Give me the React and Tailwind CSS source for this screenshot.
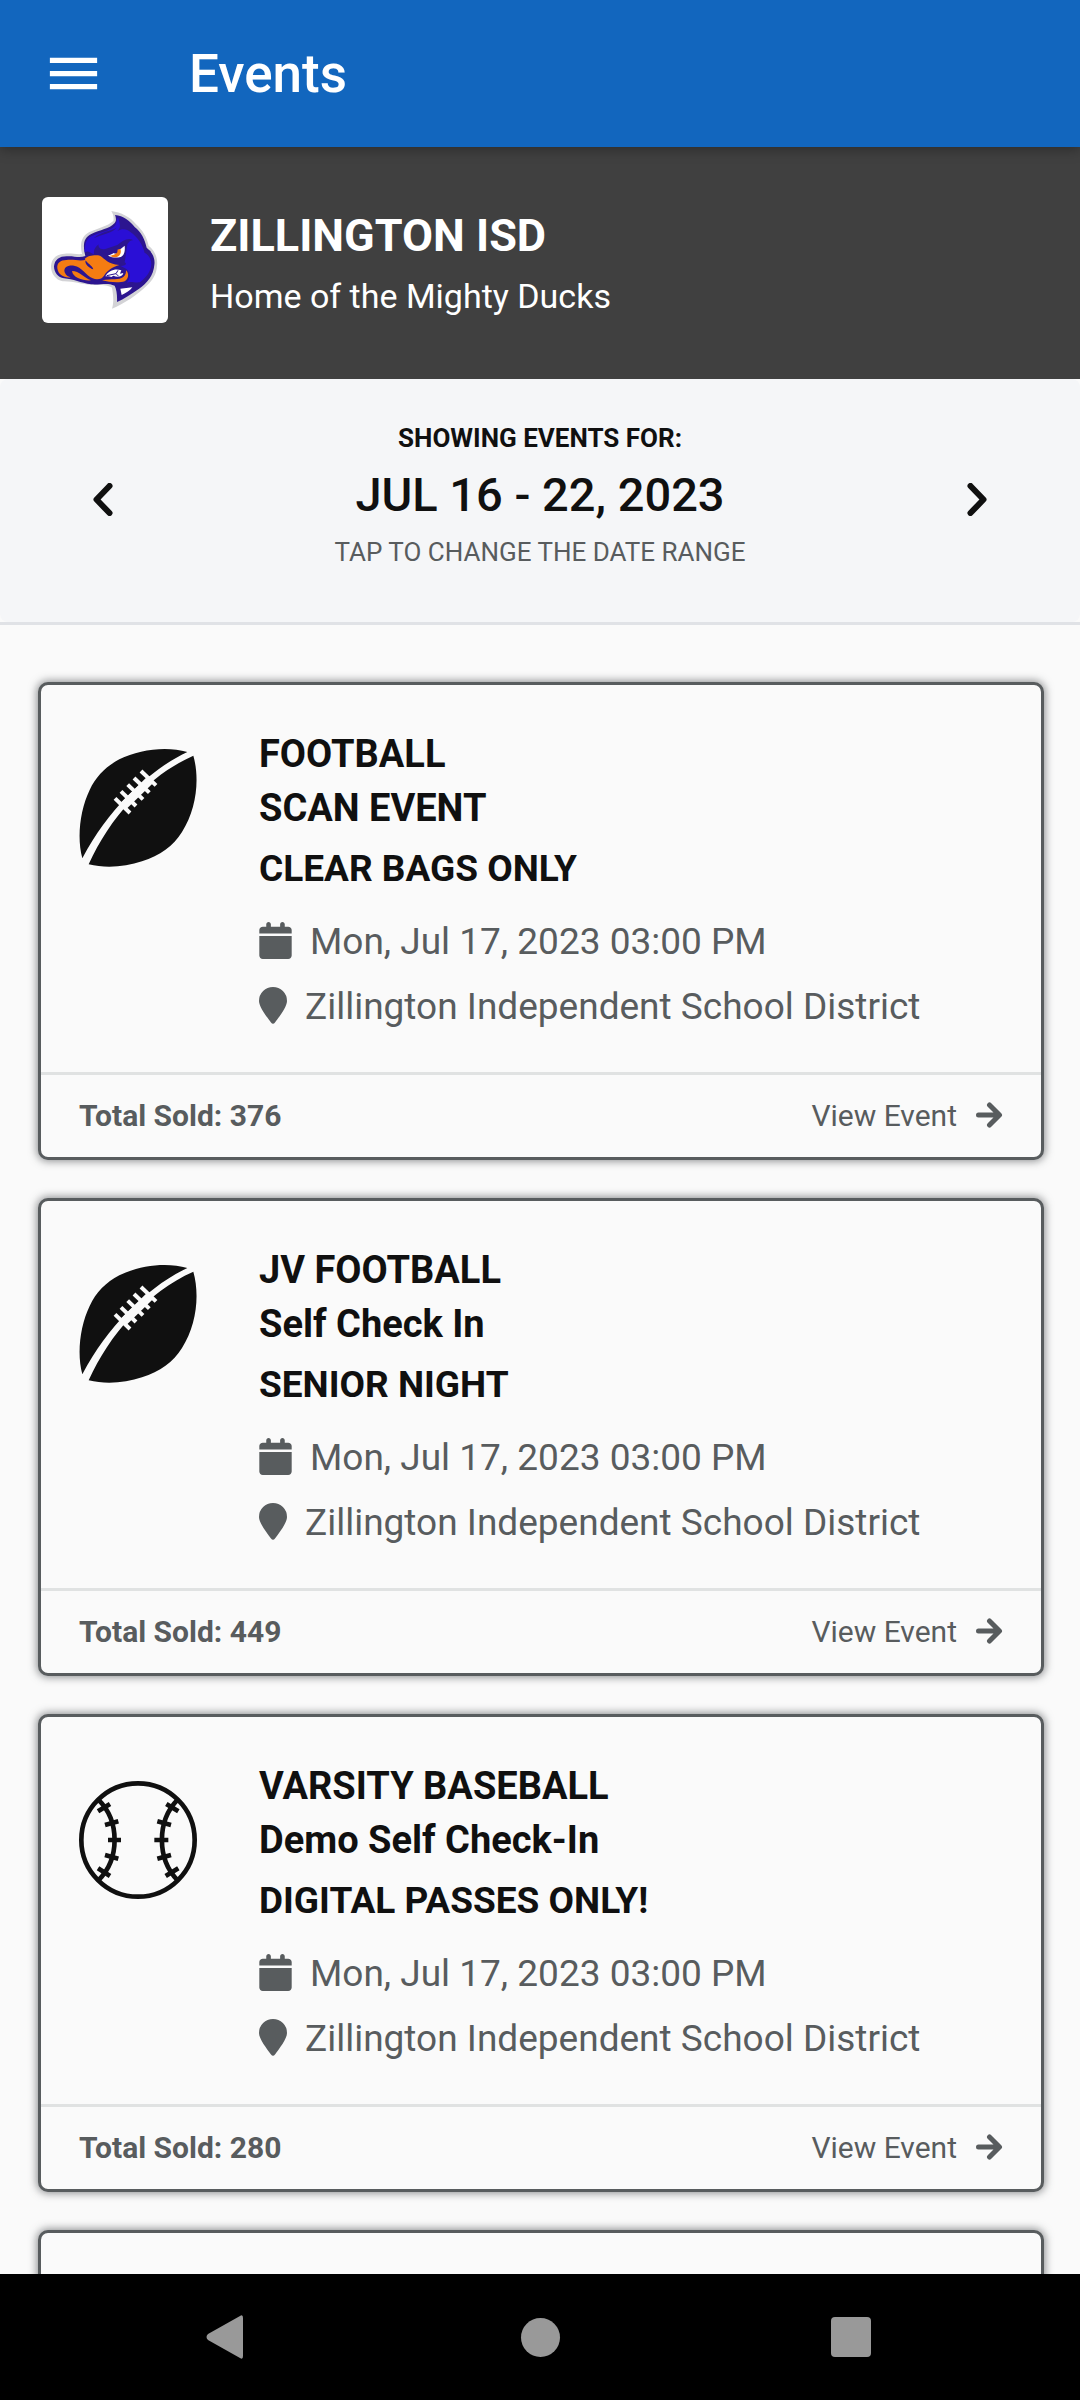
import { FaCalendar } from "react-icons/fa6";

const events = [
  { sport: "FOOTBALL", name: "SCAN EVENT", note: "CLEAR BAGS ONLY", sold: 376, icon: "football" },
  { sport: "JV FOOTBALL", name: "Self Check In", note: "SENIOR NIGHT", sold: 449, icon: "football" },
  { sport: "VARSITY BASEBALL", name: "Demo Self Check-In", note: "DIGITAL PASSES ONLY!", sold: 280, icon: "baseball" },
];

function Football() {
  return (
    <svg viewBox="57 57 354 354" className="mt-[22px] size-[118px] shrink-0" aria-hidden="true">
      <path fill="#101010" d="M382 66C320 48 238 58 178 88C138 109 108 139 89 180C60 240 50 322 67 385C106 312 150 252 202 199C262 140 315 98 382 66Z" />
      <path fill="#101010" d="M400 77C420 148 409 238 366 306C340 348 300 377 246 394C196 411 136 415 86 403C118 334 158 270 212 214C270 155 330 108 400 77Z" />
      <g stroke="#fafafa" strokeWidth="12">
        <path d="M165 205L210 249" />
        <path d="M183 184L228 228" />
        <path d="M203 164L249 208" />
        <path d="M222 144L268 188" />
        <path d="M243 123L288 166" />
        <path strokeWidth="26" d="M187 231L272 148" />
      </g>
    </svg>
  );
}

function Baseball() {
  return (
    <svg viewBox="57 60 354 354" className="mt-[22px] size-[118px] shrink-0" fill="none" stroke="#101010" strokeWidth="14" aria-hidden="true">
      <circle cx="234" cy="237" r="170" />
      <path d="M115 116C180 180 180 294 115 358" />
      <path d="M353 116C290 180 290 294 353 358" />
      <path d="M114 151L150 129M135 192L175 181M144 237H183M135 282L175 293M114 322L150 345" />
      <path d="M355 151L319 129M333 192L292 181M325 237H283M333 282L292 293M355 322L317 345" />
    </svg>
  );
}

function DuckLogo() {
  return (
    <svg viewBox="36 36 378 378" className="size-[126px] shrink-0 rounded-md bg-white" role="img" aria-label="Mighty Ducks logo">
      <path fill="#d3d3d6" d="M244 78C272 82 302 96 318 118C338 136 350 156 356 182C376 198 384 222 381 242C380 266 368 286 350 302C324 328 282 356 246 371C252 352 250 330 246 308C236 300 214 299 184 300C150 298 132 288 98 289C76 284 62 264 63 242C65 220 80 207 104 206C124 204 140 209 156 207C148 176 156 152 178 141C204 130 232 124 250 108C252 98 250 88 244 78Z" />
      <path fill="#2c1590" d="M255 90C280 92 300 108 314 126C334 142 344 162 350 188C368 202 376 222 373 240C370 272 352 294 326 312C304 328 282 342 261 351C262 332 260 314 254 302C232 292 212 300 184 298C152 294 130 282 102 280C84 278 72 262 72 244C74 224 88 214 110 214C130 212 148 220 166 213C158 180 160 158 184 147C210 134 238 132 254 114C260 106 258 98 255 90Z" />
      <path fill="#2a0fd6" d="M264 97C268 112 276 128 262 138C276 130 292 132 302 142C322 156 338 178 344 204C352 206 364 220 364 238C362 262 348 278 330 292C312 294 304 288 290 293C302 280 304 262 288 251L272 243C288 242 292 236 284 232L292 178C298 168 304 164 310 166C294 156 278 168 262 180L226 192C208 196 204 184 206 178C196 186 190 194 192 208C180 204 176 196 164 202C164 182 166 164 184 154C206 144 228 140 246 130C262 120 258 108 264 97Z" />
      <path fill="#2c1590" d="M191 160C214 138 240 140 260 128C242 148 216 146 191 160ZM338 178C345 190 352 196 364 199C350 202 340 192 338 178ZM240 204C258 190 278 188 291 176C282 190 272 196 262 202Z" />
      <path fill="#f57c12" d="M82 250C80 234 92 225 109 225C132 222 150 230 168 224C160 236 180 250 190 253C186 240 172 236 164 222C174 210 198 210 210 212C226 222 232 236 268 240C248 246 232 256 222 272C216 282 202 286 188 280C166 270 156 246 132 242C112 240 100 248 104 262C108 272 116 276 122 277C104 280 84 270 82 250Z" />
      <path fill="#f57c12" d="M126 258C148 258 162 278 183 286C160 288 128 278 126 258ZM216 286C246 280 266 286 280 276C288 270 288 262 288 256C298 266 296 282 284 289C268 294 238 292 216 286Z" />
      <path fill="#fff" d="M234 212C252 204 270 194 284 182C286 200 282 212 272 216C258 219 246 218 234 212Z" />
      <path fill="#f57c12" d="M240 212C254 210 262 204 262 194L271 191C276 206 268 216 256 217C248 217 242 214 240 212Z" />
      <path fill="#2c1590" d="M250 200L262 194C264 202 260 208 252 205Z" />
      <path fill="#fff" d="M226 274C236 256 256 250 274 256L270 266L280 264C278 276 262 278 250 272L244 276C238 274 232 274 226 274ZM271 311L307 307C300 318 286 324 275 330Z" />
      <path fill="none" stroke="#2c1590" strokeWidth="3" d="M230 272L258 266L264 256M258 266L266 274" />
    </svg>
  );
}

function ChevronLeft() {
  return (
    <svg viewBox="0 0 21 33" className="h-[33px] w-[21px]" fill="none" stroke="#101010" strokeWidth="6" strokeLinecap="round" strokeLinejoin="round" aria-hidden="true">
      <path d="M17.500 3L4.500 16.500L17.500 30" />
    </svg>
  );
}

function ChevronRight() {
  return (
    <svg viewBox="0 0 21 33" className="h-[33px] w-[21px]" fill="none" stroke="#101010" strokeWidth="6" strokeLinecap="round" strokeLinejoin="round" aria-hidden="true">
      <path d="M3.500 3L16.500 16.500L3.500 30" />
    </svg>
  );
}

function EventCard({ event }) {
  return (
    <article className="min-h-[478px] shrink-0 rounded-[10px] border-[3px] border-[#585c5e] bg-[#fafafa] shadow-[0_0_8px_1px_rgba(60,64,66,0.6)]">
      {event && (
        <>
          <div className="flex gap-[62px] px-[38px] pt-[42px] pb-[38px]">
            {event.icon === "football" ? <Football /> : <Baseball />}
            <div className="text-[37px] leading-[54px] text-[#585c5e]">
              <h2 className="text-[38px] font-bold text-[#101010]">{event.sport}</h2>
              <p className="text-[38px] font-bold text-[#101010]">{event.name}</p>
              <p className="mt-[7px] font-bold text-[#101010]">{event.note}</p>
              <p className="mt-[19px] flex items-center gap-[18px]">
                <FaCalendar className="mb-[3px] h-[37px] w-[33px]" aria-hidden="true" />
                Mon, Jul 17, 2023 03:00 PM
              </p>
              <p className="mt-[11px] flex items-center gap-[18px]">
                <svg viewBox="0 0 28 37" className="mb-[3px] h-[37px] w-[28px]" fill="currentColor" aria-hidden="true">
                  <path d="M14 0A14 14 0 0 1 28 14C28 20 20 30 16 35.500Q14 38 12 35.500C8 30 0 20 0 14A14 14 0 0 1 14 0Z" />
                </svg>
                Zillington Independent School District
              </p>
            </div>
          </div>
          <footer className="flex items-center justify-between border-t-[3px] border-[#e0e2e2] px-[38px] py-[17px] text-[30px] leading-[48px] text-[#585c5e]">
            <span className="font-bold">Total Sold: {event.sold}</span>
            <a href="#event" className="flex items-center gap-[19px]">
              View Event
              <svg viewBox="0 0 27 26" className="mb-[3px] h-[26px] w-[27px]" fill="none" stroke="currentColor" strokeWidth="5" strokeLinecap="round" strokeLinejoin="round" aria-hidden="true">
                <path d="M2.500 13H22M13.500 3L23.500 13L13.500 23" />
              </svg>
            </a>
          </footer>
        </>
      )}
    </article>
  );
}

export default function App() {
  return (
    <div className="flex h-screen flex-col overflow-hidden bg-[#fafafa] font-[Roboto,sans-serif] text-[#101010]">
      <header className="relative flex shrink-0 items-center gap-[84px] bg-[#1266be] px-[42px] py-[42px] text-white shadow-[0_2px_12px_rgba(0,0,0,0.35)]">
        <button aria-label="Open menu">
          <svg viewBox="0 0 24 24" className="size-[63px]" fill="currentColor" aria-hidden="true">
            <path d="M3 18h18v-2H3v2zm0-5h18v-2H3v2zm0-7v2h18V6H3z" />
          </svg>
        </button>
        <h1 className="text-[53px] leading-[60px] font-medium">Events</h1>
      </header>

      <section className="flex shrink-0 items-start gap-[42px] bg-[#404040] px-[42px] pt-[50px] pb-[53px] text-white">
        <DuckLogo />
        <div className="pt-[9px]">
          <h2 className="text-[45px] leading-[60px] font-bold">ZILLINGTON ISD</h2>
          <p className="text-[34px] leading-[60px]">Home of the Mighty Ducks</p>
        </div>
      </section>

      <div className="shrink-0 border-b-[3px] border-[#e0e2e6]">
        <section className="flex items-center justify-between rounded-lg bg-[#f5f6f8] px-[92px] pt-[34px] pb-[45px]">
          <button aria-label="Previous week" className="pt-2"><ChevronLeft /></button>
          <button className="flex flex-col items-center">
            <span className="text-[26px] leading-[50px] font-bold">SHOWING EVENTS FOR:</span>
            <span className="text-[47px] leading-[64px] font-medium">JUL 16 - 22, 2023</span>
            <span className="text-[26px] leading-[50px] text-[#585c5e]">TAP TO CHANGE THE DATE RANGE</span>
          </button>
          <button aria-label="Next week" className="pt-2"><ChevronRight /></button>
        </section>
      </div>

      <main className="flex min-h-0 flex-1 flex-col gap-[38px] overflow-hidden pt-[57px] pr-9 pl-[38px]">
        {events.map((event) => <EventCard key={event.sport} event={event} />)}
        <EventCard />
      </main>

      <nav className="grid shrink-0 grid-cols-[5fr_2fr_5fr] place-items-center bg-black py-[41px] text-[#999]" aria-label="System navigation">
        <button aria-label="Back">
          <svg viewBox="0 0 38 44" className="h-11 w-[38px]" fill="currentColor" aria-hidden="true">
            <path d="M34 1Q37 -1 37 3V41Q37 45 34 43L2 25Q-1 22 2 19Z" />
          </svg>
        </button>
        <button aria-label="Home" className="size-[39px] rounded-full bg-[#999]" />
        <button aria-label="Recent apps" className="mr-2 size-10 rounded-[4px] bg-[#999]" />
      </nav>
    </div>
  );
}
